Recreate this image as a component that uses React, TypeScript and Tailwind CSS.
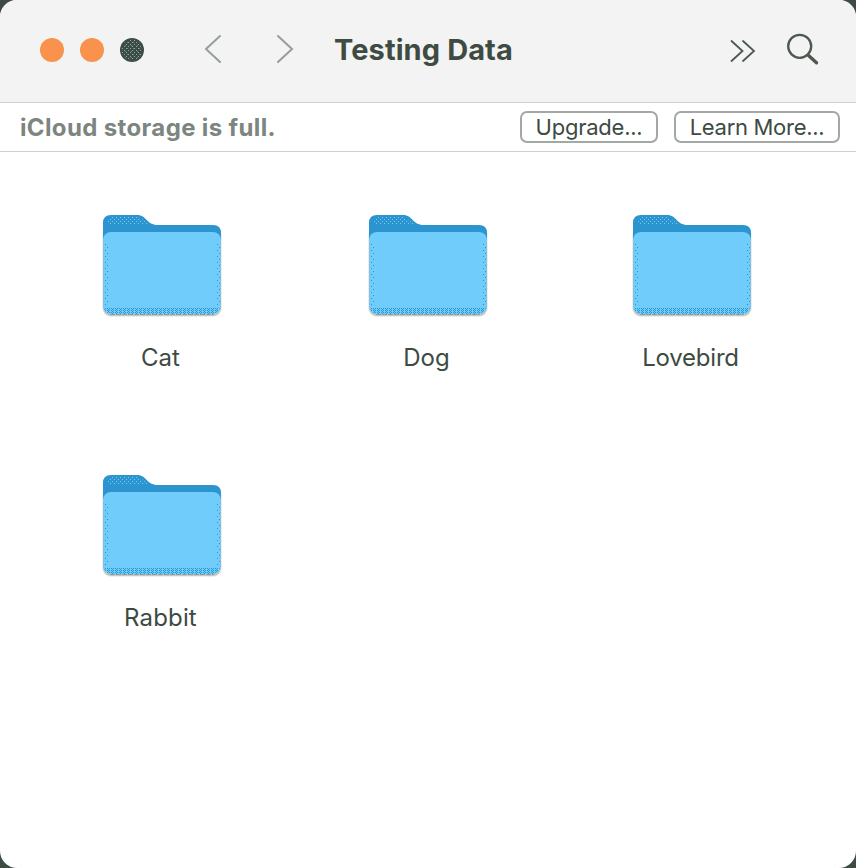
import React from "react";

const folders = [
  { name: "Cat", tracking: "tracking-[0.1px]" },
  { name: "Dog", tracking: "tracking-[0.1px]" },
  { name: "Lovebird", tracking: "tracking-[-0.2px]" },
  { name: "Rabbit", tracking: "tracking-[0.15px]" },
];

function FolderIcon() {
  return (
    <svg width="124" height="108" viewBox="0 0 124 108" aria-hidden="true">
      <defs>
        <pattern id="tab-dots" width="4" height="4" patternUnits="userSpaceOnUse">
          <rect x="0" y="0" width="1" height="1" fill="#70ccfa" />
          <rect x="2" y="2" width="1" height="1" fill="#70ccfa" />
        </pattern>
        <pattern id="side-dots" width="4" height="6" patternUnits="userSpaceOnUse">
          <rect x="1" y="1" width="1" height="1" fill="#2c94ce" />
          <rect x="3" y="4" width="1" height="1" fill="#2c94ce" />
        </pattern>
        <pattern id="base-dots" width="4" height="2" patternUnits="userSpaceOnUse">
          <rect x="0" y="0" width="1" height="1" fill="#2c94ce" />
          <rect x="1" y="1" width="1" height="1" fill="#2c94ce" />
          <rect x="3" y="1" width="1" height="1" fill="#2c94ce" />
        </pattern>
        <pattern id="edge-dots" width="1" height="3" patternUnits="userSpaceOnUse">
          <rect width="1" height="1" fill="#b9a39a" />
        </pattern>
      </defs>
      <rect x="2" y="14" width="120" height="90" rx="9" fill="#eceeee" />
      <rect x="3" y="20" width="118" height="83" rx="8" fill="#c3c7c5" />
      <path d="M3 30V10Q3 2 11 2H37C47 2 46 12 58 12H113Q121 12 121 20V50H3Z" fill="#2c94ce" />
      <path d="M7 10Q8 4 13 4H37Q43 6 48 11H7Z" fill="url(#tab-dots)" />
      <rect x="3" y="19" width="118" height="82" rx="8" fill="#70ccfa" />
      <path d="M4 29h4v65H4zM116 29h4v65h-4z" fill="url(#side-dots)" />
      <path d="M4 95H120L118 98Q115 101 111 101H13Q8 101 5 98Z" fill="url(#base-dots)" />
      <path d="M3 29h1v65H3zM120 29h1v65h-1z" fill="url(#edge-dots)" />
      <path d="M10 101.5H114" stroke="#8a9ca4" strokeDasharray="5 1" />
    </svg>
  );
}

export default function App() {
  return (
    <div className="h-[868px] w-[856px] overflow-hidden bg-[#3d4b42] font-['Inter','Liberation_Sans',sans-serif] text-[#3d4b42]">
      <main className="flex h-full flex-col overflow-hidden rounded-[17px] bg-white">
        <header className="flex h-[103px] shrink-0 items-start border-b border-[#cdd2d1] bg-[#f3f3f3]">
          <div className="ml-10 mt-[38px] flex gap-4">
            <span className="size-6 rounded-full bg-[#f9924d]" />
            <span className="size-6 rounded-full bg-[#f9924d]" />
            <svg width="24" height="24" viewBox="0 0 24 24" aria-hidden="true">
              <defs>
                <pattern id="light-dots" width="4" height="4" patternUnits="userSpaceOnUse">
                  <rect x="0" y="0" width="1" height="1" fill="#9aa19d" />
                  <rect x="2" y="2" width="1" height="1" fill="#9aa19d" />
                </pattern>
                <pattern id="blue-dots" width="6" height="6" patternUnits="userSpaceOnUse">
                  <rect x="1" y="4" width="1" height="1" fill="#2c94ce" />
                  <rect x="5" y="1" width="1" height="1" fill="#2c94ce" />
                </pattern>
              </defs>
              <circle cx="12" cy="12" r="12" fill="#3d4b42" />
              <circle cx="12" cy="12" r="10.5" fill="url(#light-dots)" />
              <circle cx="12" cy="12" r="10.5" fill="url(#blue-dots)" />
            </svg>
          </div>
          <svg className="ml-[60px] mt-[34px]" width="90" height="30" fill="none" stroke="#969e9a" strokeWidth="2" strokeLinecap="round" aria-hidden="true">
            <path d="M16 2L2 15L16 28M74 2L88 15L74 28" />
          </svg>
          <h1 className="ml-[40px] mt-[32px] w-[191px] whitespace-nowrap text-[29px] leading-9 font-bold tracking-[0.1px]">Testing Data</h1>
          <svg className="ml-[205px] mt-[38px]" width="26" height="26" fill="none" stroke="#4c5850" strokeWidth="1.8" strokeLinecap="round" aria-hidden="true">
            <path d="M1.5 3L12.5 13L1.5 23M13 3L24 13L13 23" />
          </svg>
          <svg className="ml-[30px] mt-[33px]" width="34" height="34" fill="none" stroke="#4c5850" strokeWidth="2.3" aria-hidden="true">
            <circle cx="13.7" cy="13.3" r="11.5" />
            <path d="M22.5 22.5L30.5 29.8" strokeWidth="3.4" strokeLinecap="round" />
          </svg>
        </header>
        <section className="flex h-[49px] shrink-0 items-center border-b border-[#cdd2d1] pl-5 pr-4">
          <p className="mt-0.5 whitespace-nowrap text-[24px] leading-8 font-bold tracking-[0.36px] text-[#7c8580]">iCloud storage is full.</p>
          <button className="ml-auto h-8 w-[138px] whitespace-nowrap rounded-[7px] border-2 border-[#a2a9a5] text-[22px] leading-7 tracking-[-0.25px]">Upgrade...</button>
          <button className="ml-4 h-8 w-[166px] whitespace-nowrap rounded-[7px] border-2 border-[#a2a9a5] text-[22px] leading-7 tracking-[-0.3px]">Learn More...</button>
        </section>
        <section className="grid grid-cols-[266px_266px_262px] auto-rows-[260px] pl-[29px] pt-[61px]">
          {folders.map(({ name, tracking }) => (
            <div key={name} className="flex flex-col items-center">
              <FolderIcon />
              <span className={`mr-[3px] mt-[21px] text-[24px] leading-8 ${tracking}`}>{name}</span>
            </div>
          ))}
        </section>
      </main>
    </div>
  );
}
